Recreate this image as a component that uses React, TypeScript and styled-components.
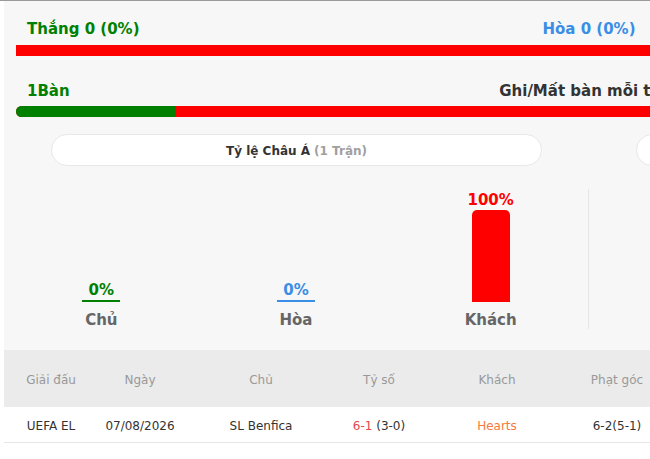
import React from "react";
import styled, { createGlobalStyle } from "styled-components";

const GlobalStyle = createGlobalStyle`
  html, body {
    margin: 0;
    padding: 0;
    background: #ffffff;
    overflow: hidden;
  }
  body {
    font-family: "DejaVu Sans", Verdana, sans-serif;
  }
`;

const Page = styled.div`
  border-top: 1px solid #9a9a9a;
  padding-left: 4px;
  width: 1174px;
`;

const Panel = styled.div`
  width: 1170px;
  background: #f7f7f7;
`;

const Summary = styled.section`
  padding: 19px 12px 0;
`;

const StatBlock = styled.div<{ $gap: number }>`
  margin-top: ${(p) => p.$gap}px;
`;

const LabelRow = styled.div`
  display: grid;
  grid-template-columns: 1fr auto 1fr;
  align-items: center;
  padding: 0 11px;
  font-size: 15px;
  font-weight: 700;
  line-height: 18px;
`;

const Label = styled.span<{ $color: string; $align: "left" | "center" | "right" }>`
  color: ${(p) => p.$color};
  text-align: ${(p) => p.$align};
  white-space: nowrap;
`;

const Track = styled.div<{ $gap: number; $rounded?: boolean }>`
  display: flex;
  height: 11px;
  margin-top: ${(p) => p.$gap}px;
  background: #ff0000;
  border-radius: ${(p) => (p.$rounded ? "6px" : "0")};
  overflow: hidden;
`;

const Fill = styled.div`
  height: 100%;
  background: #008000;
`;

const Halves = styled.div`
  display: grid;
  grid-template-columns: 585px 585px;
  margin-top: 17px;
`;

const Half = styled.div`
  display: flex;
  flex-direction: column;
`;

const Pill = styled.div`
  margin: 0 47px;
  height: 32px;
  box-sizing: border-box;
  padding-top: 1px;
  border: 1px solid #e8e8e8;
  border-radius: 16px;
  background: #ffffff;
  display: flex;
  align-items: center;
  justify-content: center;
  gap: 4px;
  font-size: 12px;
  font-weight: 700;
  color: #333333;
  white-space: nowrap;
`;

const Muted = styled.span`
  color: #a0a0a0;
`;

const Chart = styled.div<{ $divider?: boolean }>`
  margin-top: 23px;
  height: 140px;
  display: grid;
  grid-template-columns: repeat(3, 1fr);
  border-right: ${(p) => (p.$divider ? "1px solid #e6e6e6" : "none")};
`;

const Column = styled.div`
  display: flex;
  flex-direction: column;
  align-items: center;
  justify-content: flex-end;
`;

const Value = styled.div<{ $color: string }>`
  margin-bottom: 1px;
  font-size: 15px;
  font-weight: 700;
  line-height: 18px;
  color: ${(p) => p.$color};
`;

const Bar = styled.div<{ $color: string; $tall: boolean }>`
  width: 38px;
  min-height: 2px;
  background: ${(p) => p.$color};
  border-radius: ${(p) => (p.$tall ? "5px 5px 0 0" : "0")};
`;

const Caption = styled.div`
  margin-top: 9px;
  font-size: 15px;
  font-weight: 700;
  line-height: 18px;
  color: #666666;
`;

const Table = styled.div`
  margin-top: 21px;
  background: #ffffff;
  padding-bottom: 24px;
`;

const TableRow = styled.div<{ $head?: boolean }>`
  display: grid;
  grid-template-columns: 94px 84px 158px 78px 158px 82px 1fr;
  height: ${(p) => (p.$head ? "57px" : "36px")};
  background: ${(p) => (p.$head ? "#ebebeb" : "#ffffff")};
  border-bottom: ${(p) => (p.$head ? "none" : "1px solid #e6e6e6")};
  box-sizing: border-box;
`;

const Cell = styled.div<{ $head?: boolean }>`
  display: flex;
  align-items: center;
  justify-content: center;
  padding-top: 3px;
  font-size: 12px;
  color: ${(p) => (p.$head ? "#999999" : "#333333")};
  white-space: nowrap;
`;

const Tone = styled.span<{ $color: string }>`
  color: ${(p) => p.$color};
`;

const MAX_BAR = 92;

type ChartItem = { name: string; pct: number; color: string };

const asianChart: ChartItem[] = [
  { name: "Chủ", pct: 0, color: "#008000" },
  { name: "Hòa", pct: 0, color: "#3a8ee6" },
  { name: "Khách", pct: 100, color: "#ff0000" },
];

const overUnderChart: ChartItem[] = [
  { name: "Tài", pct: 100, color: "#008000" },
  { name: "Hòa", pct: 0, color: "#3a8ee6" },
  { name: "Xỉu", pct: 0, color: "#ff0000" },
];

function BarChart({ items, divider }: { items: ChartItem[]; divider?: boolean }) {
  return (
    <Chart $divider={divider}>
      {items.map((it) => {
        const h = Math.max(2, Math.round((it.pct / 100) * MAX_BAR));
        return (
          <Column key={it.name}>
            <Value $color={it.color}>{it.pct}%</Value>
            <Bar $color={it.color} $tall={h > 10} style={{ height: h }} />
            <Caption>{it.name}</Caption>
          </Column>
        );
      })}
    </Chart>
  );
}

const headers = ["Giải đấu", "Ngày", "Chủ", "Tỷ số", "Khách", "Phạt góc", ""];

export default function App() {
  return (
    <>
      <GlobalStyle />
      <Page>
        <Panel>
          <Summary>
            <StatBlock $gap={0}>
              <LabelRow>
                <Label $color="#008000" $align="left">Thắng 0 (0%)</Label>
                <Label $color="#3a8ee6" $align="center">Hòa 0 (0%)</Label>
                <Label $color="#ff0000" $align="right">Thua 1 (100%)</Label>
              </LabelRow>
              <Track $gap={7}>
                <Fill style={{ width: "0%" }} />
              </Track>
            </StatBlock>
            <StatBlock $gap={26}>
              <LabelRow>
                <Label $color="#008000" $align="left">1Bàn</Label>
                <Label $color="#333333" $align="center">Ghi/Mất bàn mỗi trận</Label>
                <Label $color="#ff0000" $align="right">6Bàn</Label>
              </LabelRow>
              <Track $gap={6} $rounded>
                <Fill style={{ width: "14%" }} />
              </Track>
            </StatBlock>
          </Summary>

          <Halves>
            <Half>
              <Pill>
                Tỷ lệ Châu Á <Muted>(1 Trận)</Muted>
              </Pill>
              <BarChart items={asianChart} divider />
            </Half>
            <Half>
              <Pill>
                Tài Xỉu <Muted>(1 Trận)</Muted>
              </Pill>
              <BarChart items={overUnderChart} />
            </Half>
          </Halves>

          <Table>
            <TableRow $head>
              {headers.map((h, i) => (
                <Cell $head key={i}>{h}</Cell>
              ))}
            </TableRow>
            <TableRow>
              <Cell>UEFA EL</Cell>
              <Cell>07/08/2026</Cell>
              <Cell>SL Benfica</Cell>
              <Cell>
                <Tone $color="#e2484d">6-1</Tone>&nbsp;(3-0)
              </Cell>
              <Cell>
                <Tone $color="#f57a3d">Hearts</Tone>
              </Cell>
              <Cell>6-2(5-1)</Cell>
              <Cell />
            </TableRow>
          </Table>
        </Panel>
      </Page>
    </>
  );
}
